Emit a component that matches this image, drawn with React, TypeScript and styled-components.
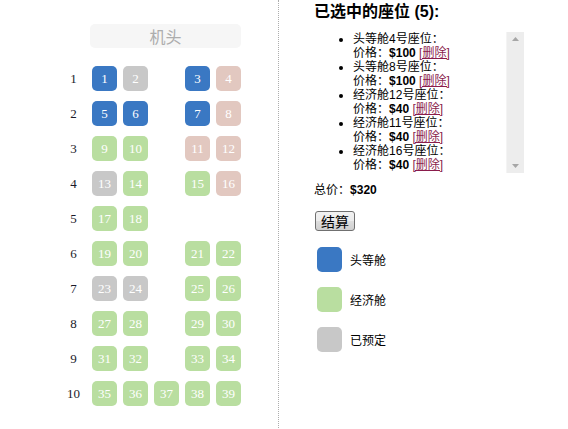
import React from 'react'
import styled, { createGlobalStyle, css } from 'styled-components'

type SeatKind = 'first' | 'economy' | 'taken' | 'selected'

const seatColors: Record<SeatKind, string> = {
	first: '#3a78c3',
	economy: '#b9dea0',
	taken: '#c8c8c8',
	selected: '#e2c8c0'
}

const GlobalStyle = createGlobalStyle`
	html, body {
		margin: 0;
		padding: 0;
		background: #fff;
		overflow: hidden;
		font-family: "Liberation Serif", "Noto Sans CJK SC", serif;
		font-size: 12px;
		color: #000;
	}
`

const Page = styled.div`
	display: flex;
	align-items: flex-start;
	height: 429px;
`

const SeatMap = styled.div`
	width: 200px;
	height: 100%;
	margin-left: 38px;
	padding: 19px 20px 0;
	border-right: 1px dotted #adadad;
`

const FrontIndicator = styled.div`
	width: 145px;
	padding: 3px;
	margin: 5px 32px 15px;
	background: #f6f6f6;
	border-radius: 5px;
	color: #adadad;
	text-align: center;
	font-family: "Noto Sans CJK SC", sans-serif;
	font-size: 16px;
	line-height: 18px;
`

const SeatRow = styled.div`
	display: flex;
	height: 35px;
`

const cellBase = css`
	width: 25px;
	height: 25px;
	margin: 3px;
	line-height: 25px;
	text-align: center;
	font-size: 13px;
	flex: none;
`

const RowLabel = styled.div`
	${cellBase};
	color: #1a1a2a;
`

const Seat = styled.div<{ $kind: SeatKind }>`
	${cellBase};
	border-radius: 5px;
	color: #fff;
	background: ${({ $kind }) => seatColors[$kind]};
`

const Gap = styled.div`
	${cellBase};
`

const Details = styled.div`
	margin-left: 35px;
	font-size: 12px;
	font-family: "Liberation Sans", "Noto Sans CJK SC", sans-serif;
`

const Title = styled.h2`
	margin: 2px 0 10px;
	font-size: 16px;
	line-height: 20px;
	font-weight: bold;
`

const ListBox = styled.div`
	display: flex;
	width: 210px;
	height: 141px;
`

const SelectedList = styled.ul`
	flex: 1;
	margin: 0;
	padding: 0 0 0 39px;
	overflow: hidden;
	line-height: 14px;
	list-style: disc;
`

const ScrollTrack = styled.div`
	width: 17px;
	display: flex;
	flex-direction: column;
	justify-content: space-between;
	align-items: center;
	background: #ededed;
	border-left: 1px solid #f4f4f4;
	padding: 5px 0;
`

const Delete = styled.a`
	color: #8a1c4c;
	text-decoration: underline;
	cursor: pointer;
`

const Total = styled.div`
	margin-top: 10px;
	line-height: 14px;
`

const CheckoutButton = styled.button`
	display: block;
	margin: 14px 0 16px 1px;
	height: 20px;
	padding: 0 5px;
	font-size: 14px;
	line-height: 16px;
	font-family: "Noto Sans CJK SC", sans-serif;
	border: 1px solid #707070;
	border-radius: 3px;
	background: linear-gradient(#f2f2f2, #ebebeb 50%, #dddddd 51%, #cfcfcf);
	color: #000;
`

const Legend = styled.ul`
	margin: 0;
	padding: 0 0 0 3px;
	list-style: none;
	display: flex;
	flex-direction: column;
	gap: 15px;
`

const LegendItem = styled.li`
	display: flex;
	align-items: center;
	gap: 8px;
`

const Swatch = styled.span<{ $kind: SeatKind }>`
	width: 25px;
	height: 25px;
	border-radius: 5px;
	background: ${({ $kind }) => seatColors[$kind]};
`

const Arrow = ({ down }: { down?: boolean }) => (
	<svg width="7" height="4" viewBox="0 0 7 4">
		<path d={down ? 'M0 0 L7 0 L3.5 4 Z' : 'M0 4 L7 4 L3.5 0 Z'} fill="#a6a6a6" />
	</svg>
)

type Cell = [number, SeatKind] | null

const rows: Cell[][] = [
	[[1, 'first'], [2, 'taken'], null, [3, 'first'], [4, 'selected']],
	[[5, 'first'], [6, 'first'], null, [7, 'first'], [8, 'selected']],
	[[9, 'economy'], [10, 'economy'], null, [11, 'selected'], [12, 'selected']],
	[[13, 'taken'], [14, 'economy'], null, [15, 'economy'], [16, 'selected']],
	[[17, 'economy'], [18, 'economy']],
	[[19, 'economy'], [20, 'economy'], null, [21, 'economy'], [22, 'economy']],
	[[23, 'taken'], [24, 'taken'], null, [25, 'economy'], [26, 'economy']],
	[[27, 'economy'], [28, 'economy'], null, [29, 'economy'], [30, 'economy']],
	[[31, 'economy'], [32, 'economy'], null, [33, 'economy'], [34, 'economy']],
	[[35, 'economy'], [36, 'economy'], [37, 'economy'], [38, 'economy'], [39, 'economy']]
]

const selected = [
	{ cls: '头等舱', no: 4, price: 100 },
	{ cls: '头等舱', no: 8, price: 100 },
	{ cls: '经济舱', no: 12, price: 40 },
	{ cls: '经济舱', no: 11, price: 40 },
	{ cls: '经济舱', no: 16, price: 40 }
]

export default function App() {
	const total = selected.reduce((sum, s) => sum + s.price, 0)
	return (
		<Page>
			<GlobalStyle />
			<SeatMap>
				<FrontIndicator>机头</FrontIndicator>
				{rows.map((row, i) => (
					<SeatRow key={i}>
						<RowLabel>{i + 1}</RowLabel>
						{row.map((cell, j) =>
							cell ? (
								<Seat key={j} $kind={cell[1]}>
									{cell[0]}
								</Seat>
							) : (
								<Gap key={j} />
							)
						)}
					</SeatRow>
				))}
			</SeatMap>
			<Details>
				<Title>已选中的座位 (5):</Title>
				<ListBox>
					<SelectedList>
						{selected.map((s) => (
							<li key={s.no}>
								{s.cls}
								{s.no}号座位：
								<br />
								价格：<b>${s.price}</b> <Delete>[删除]</Delete>
							</li>
						))}
					</SelectedList>
					<ScrollTrack>
						<Arrow />
						<Arrow down />
					</ScrollTrack>
				</ListBox>
				<Total>
					总价：<b>${total}</b>
				</Total>
				<CheckoutButton>结算</CheckoutButton>
				<Legend>
					<LegendItem>
						<Swatch $kind="first" />
						头等舱
					</LegendItem>
					<LegendItem>
						<Swatch $kind="economy" />
						经济舱
					</LegendItem>
					<LegendItem>
						<Swatch $kind="taken" />
						已预定
					</LegendItem>
				</Legend>
			</Details>
		</Page>
	)
}
